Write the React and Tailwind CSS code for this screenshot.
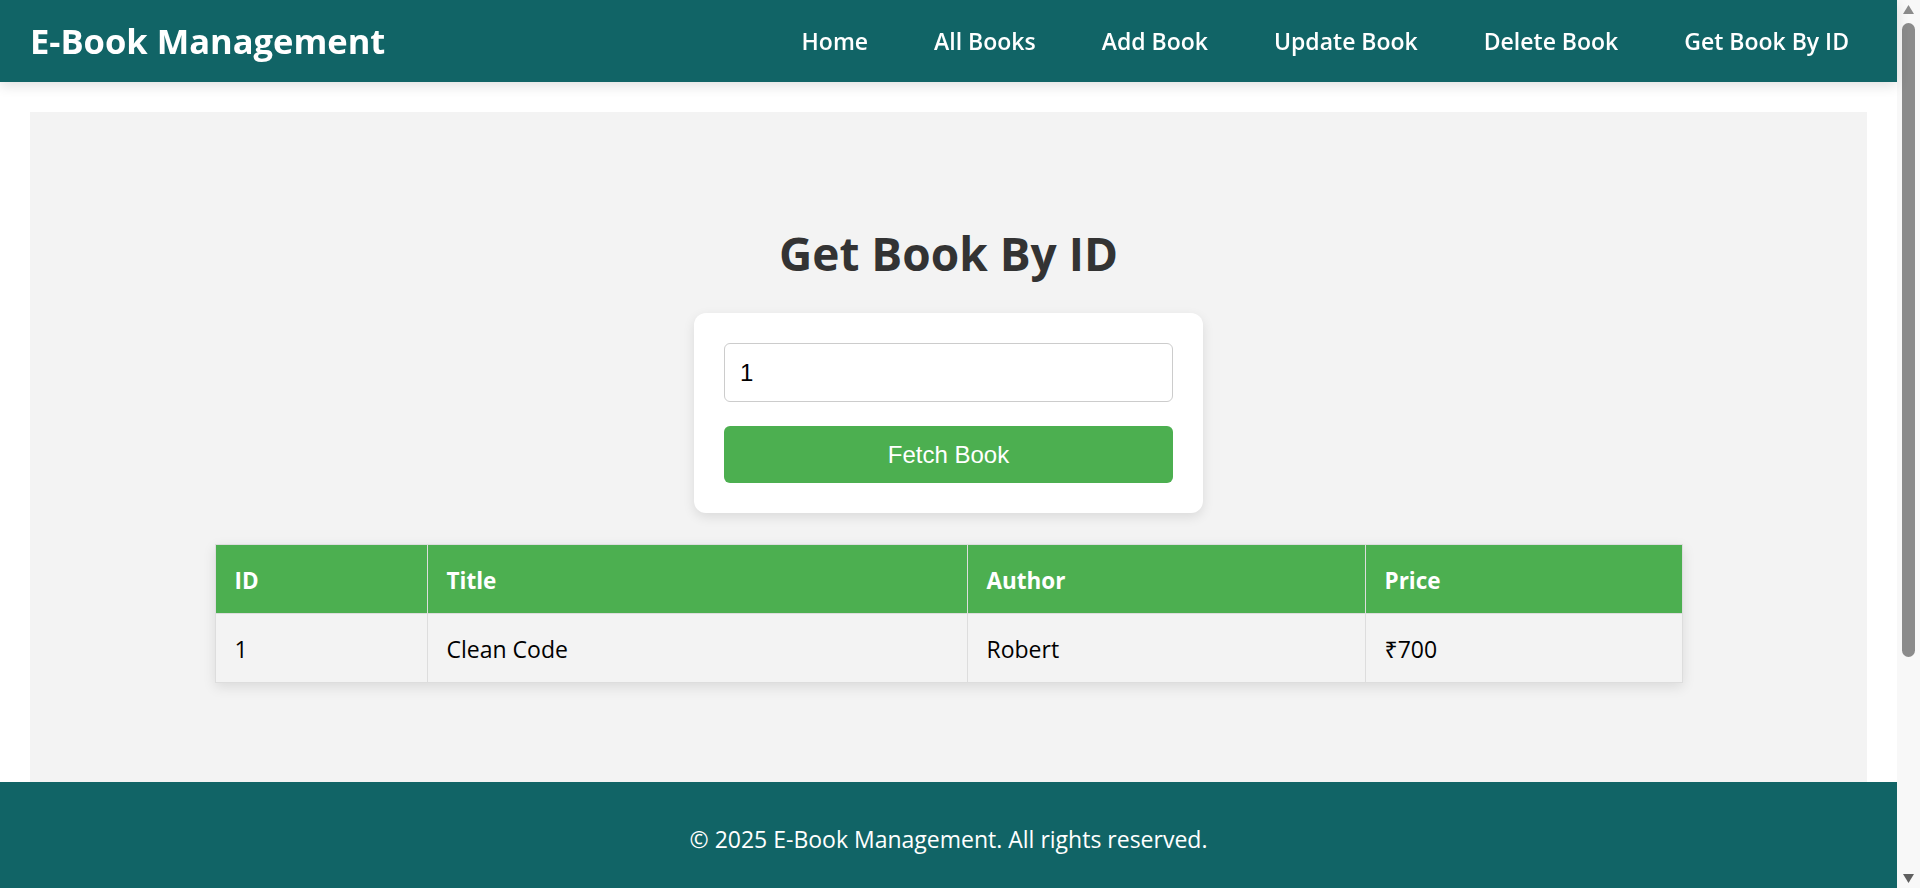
import React, { useState } from "react";

const links = ["Home", "All Books", "Add Book", "Update Book", "Delete Book", "Get Book By ID"];

const books = [{ id: 1, title: "Clean Code", author: "Robert", price: 700 }];

// window scrollbar as seen in the screenshot
function ScrollBar() {
  return (
    <div className="fixed top-0 right-0 h-full w-[23px] bg-[#f8f8f8] flex flex-col items-center">
      <svg className="mt-[5px] w-[11px] h-[9px]" viewBox="0 0 11 9">
        <path d="M5.5 0L11 9H0z" fill="#8b8b8b" />
      </svg>
      <div className="mt-[9px] w-[13px] h-[634px] rounded-full bg-[#8b8b8b]" />
      <svg className="mt-auto mb-[5px] w-[11px] h-[9px]" viewBox="0 0 11 9">
        <path d="M0 0H11L5.5 9z" fill="#5f5f5f" />
      </svg>
    </div>
  );
}

export default function App() {
  const [bookId, setBookId] = useState("1");

  return (
    <div className="min-h-screen bg-white font-['Open_Sans','Noto_Sans',sans-serif]">
      <div className="w-[1897px]">
        <header className="relative z-10 h-[82px] bg-[#116466] px-[30px] flex items-center justify-between shadow-[0_4px_12px_rgba(0,0,0,0.12)]">
          <h1 className="text-[34.5px] font-bold text-white leading-none">E-Book Management</h1>
          <nav className="flex gap-[30px]">
            {links.map((l) => (
              <a key={l} href="#" className="px-[18px] text-[23px] font-semibold text-white">
                {l}
              </a>
            ))}
          </nav>
        </header>

        <main className="m-[30px] min-h-[746px] bg-[#f3f3f3] pt-[111px] flex flex-col items-center">
          <h2 className="text-[46px] leading-[60px] font-bold text-[#333]">Get Book By ID</h2>

          <div className="mt-[30px] w-[509px] p-[30px] bg-white rounded-[12px] shadow-[0_4px_12px_rgba(0,0,0,0.1)]">
            <input
              value={bookId}
              onChange={(e) => setBookId(e.target.value)}
              className="block w-full h-[59px] px-[15px] border border-[#ccc] rounded-[6px] text-[24px] text-black font-['Liberation_Sans',Arial,sans-serif] outline-none"
            />
            <button className="mt-[24px] block w-full h-[57px] bg-[#4caf50] rounded-[6px] text-white text-[24px] font-['Liberation_Sans',Arial,sans-serif]">
              Fetch Book
            </button>
          </div>

          <table className="mt-[31px] w-[1467px] table-fixed border-collapse shadow-[0_4px_12px_rgba(0,0,0,0.1)]">
            <colgroup>
              <col className="w-[212px]" />
              <col className="w-[540px]" />
              <col className="w-[398px]" />
              <col className="w-[317px]" />
            </colgroup>
            <thead>
              <tr className="bg-[#4caf50] text-white text-[22.5px] font-bold">
                <th className="h-[69px] px-[19px] pt-[3px] text-left border border-[#ddd]">ID</th>
                <th className="h-[69px] px-[19px] pt-[3px] text-left border border-[#ddd]">Title</th>
                <th className="h-[69px] px-[19px] pt-[3px] text-left border border-[#ddd]">Author</th>
                <th className="h-[69px] px-[19px] pt-[3px] text-left border border-[#ddd]">Price</th>
              </tr>
            </thead>
            <tbody>
              {books.map((b) => (
                <tr key={b.id} className="bg-[#f3f3f3] text-[23px] text-black">
                  <td className="h-[69px] px-[19px] pt-[2px] border border-[#ddd]">{b.id}</td>
                  <td className="h-[69px] px-[19px] pt-[2px] border border-[#ddd]">{b.title}</td>
                  <td className="h-[69px] px-[19px] pt-[2px] border border-[#ddd]">{b.author}</td>
                  <td className="h-[69px] px-[19px] pt-[2px] border border-[#ddd]">₹{b.price}</td>
                </tr>
              ))}
            </tbody>
          </table>
        </main>

        <footer className="fixed bottom-0 left-0 w-[1897px] h-[106px] pt-[8px] bg-[#116466] flex items-center justify-center text-white text-[23px]">
          © 2025 E-Book Management. All rights reserved.
        </footer>
      </div>
      <ScrollBar />
    </div>
  );
}
